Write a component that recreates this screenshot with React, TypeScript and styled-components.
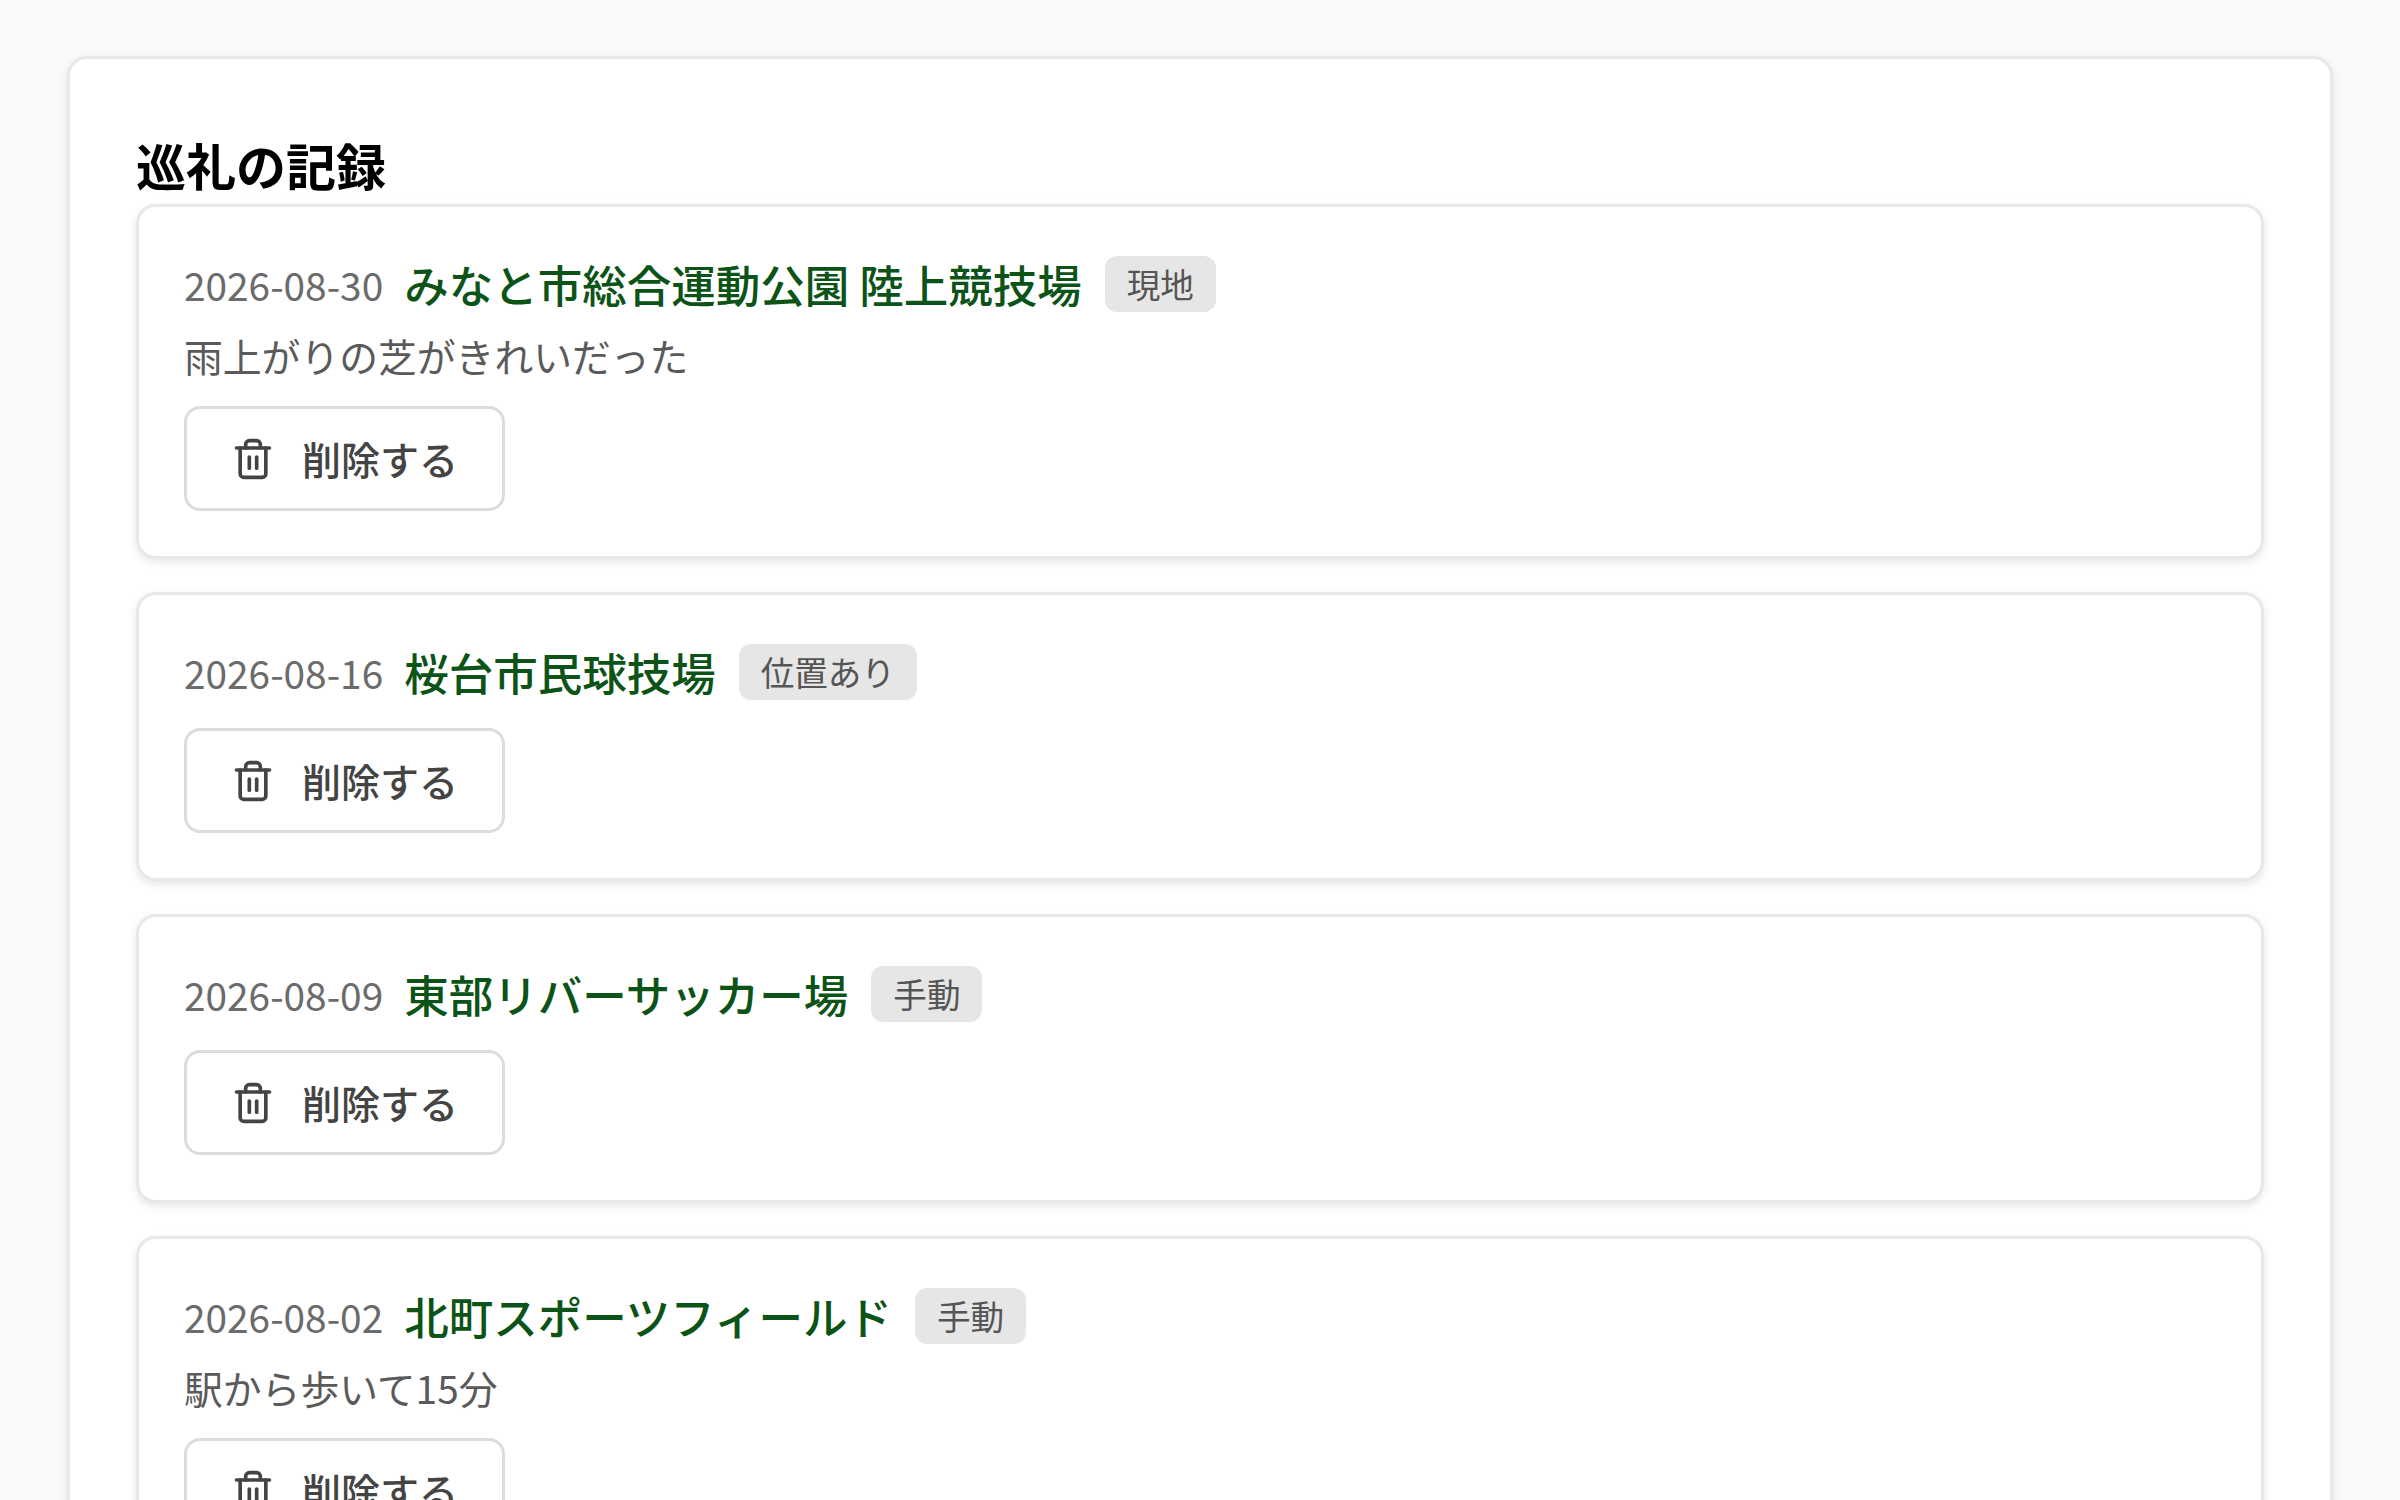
import React from 'react';
import styled, { createGlobalStyle } from 'styled-components';
import { Trash2 } from 'lucide-react';

const GlobalStyle = createGlobalStyle`
  html, body {
    margin: 0;
    padding: 0;
    background: #fafafa;
    height: 100%;
    overflow: hidden;
  }
  body {
    font-family: "Noto Sans CJK JP", "Noto Sans", sans-serif;
    line-height: 1.6;
    color: #111;
  }
`;

const Page = styled.main`
  padding: 56px 67px 0;
`;

const Panel = styled.section`
  background: #fff;
  border: 3px solid #e8e8e8;
  border-radius: 20px;
  box-shadow: 0 3px 8px rgba(0, 0, 0, 0.1);
  padding: 66px;
`;

const Heading = styled.h2`
  margin: 0;
  font-size: 50px;
  font-weight: 700;
  line-height: 79px;
  color: #000;
`;

const VisitList = styled.div`
  display: flex;
  flex-direction: column;
  gap: 33px;
`;

const VisitCard = styled.article`
  background: #fff;
  border: 3px solid #e8e8e8;
  border-radius: 20px;
  box-shadow: 0 3px 8px rgba(0, 0, 0, 0.1);
  padding: 45px;
`;

const TitleRow = styled.div`
  display: flex;
  align-items: center;
  height: 64px;
`;

const VisitDate = styled.span`
  margin-right: 21px;
  font-size: 38.8px;
  color: #6b6b6b;
`;

const VisitName = styled.span`
  margin-right: 23px;
  font-size: 44.5px;
  font-weight: 500;
  color: #0b5316;
`;

const Chip = styled.span`
  display: inline-flex;
  align-items: center;
  height: 56px;
  padding: 0 22px;
  border-radius: 12px;
  background: #e6e6e6;
  font-size: 33.6px;
  color: #555;
`;

const Note = styled.p`
  margin: 13px 0 0;
  font-size: 38.8px;
  line-height: 53px;
  color: #5a5a5a;
`;

const DeleteButton = styled.button`
  display: inline-flex;
  align-items: center;
  gap: 27px;
  height: 105px;
  margin-top: 24px;
  padding: 0 44px;
  background: #fff;
  border: 3px solid #dcdcdc;
  border-radius: 16px;
  font-family: inherit;
  font-size: 39px;
  font-weight: 500;
  color: #444;
`;

const ButtonLabel = styled.span`
  margin-bottom: 1px;
`;

const visits = [
  { date: '2026-08-30', name: 'みなと市総合運動公園 陸上競技場', chip: '現地', note: '雨上がりの芝がきれいだった' },
  { date: '2026-08-16', name: '桜台市民球技場', chip: '位置あり' },
  { date: '2026-08-09', name: '東部リバーサッカー場', chip: '手動' },
  { date: '2026-08-02', name: '北町スポーツフィールド', chip: '手動', note: '駅から歩いて15分' },
];

const App: React.FC = () => (
  <Page>
    <GlobalStyle />
    <Panel>
      <Heading>巡礼の記録</Heading>
      <VisitList>
        {visits.map((v) => (
          <VisitCard key={v.date}>
            <TitleRow>
              <VisitDate>{v.date}</VisitDate>
              <VisitName>{v.name}</VisitName>
              <Chip>{v.chip}</Chip>
            </TitleRow>
            {v.note && <Note>{v.note}</Note>}
            <DeleteButton type="button">
              <Trash2 size={44} strokeWidth={2} />
              <ButtonLabel>削除する</ButtonLabel>
            </DeleteButton>
          </VisitCard>
        ))}
      </VisitList>
    </Panel>
  </Page>
);

export default App;
